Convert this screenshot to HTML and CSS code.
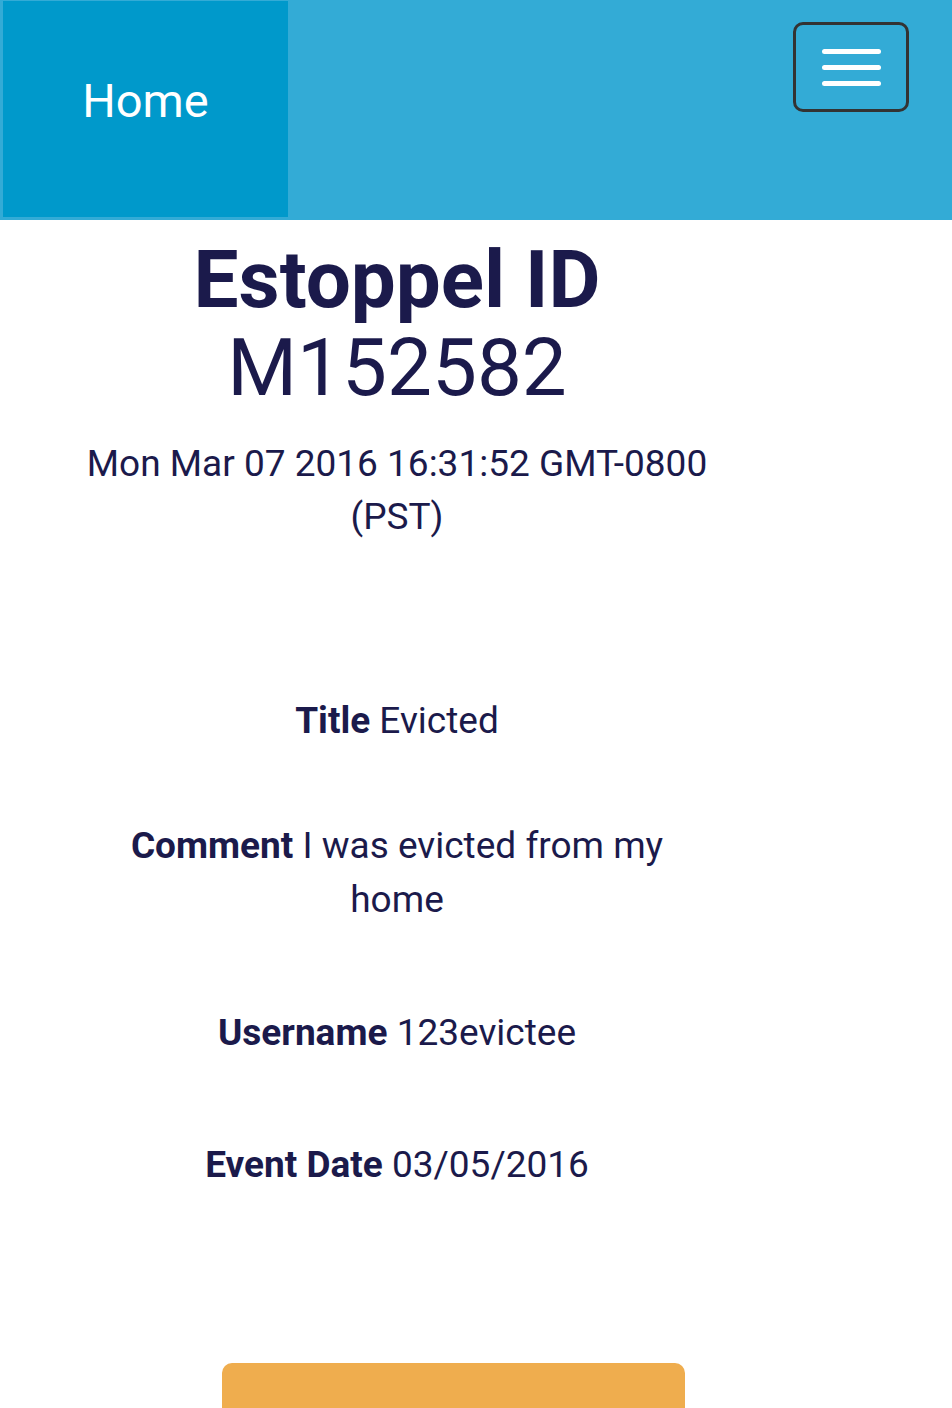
FILE: index.html
```html
<!DOCTYPE html>
<html lang="en">
<head>
<meta charset="utf-8">
<title>Estoppel ID M152582</title>
<link rel="stylesheet" href="styles.css">
</head>
<body>
<header class="topbar">
  <a class="home-link" href="#">Home</a>
  <button class="menu-toggle" type="button" aria-label="Menu">
    <span class="bar"></span>
    <span class="bar"></span>
    <span class="bar"></span>
  </button>
</header>
<main class="content">
  <h1 class="heading">Estoppel ID<br><span class="id">M152582</span></h1>
  <p class="timestamp">Mon Mar 07 2016 16:31:52 GMT-0800 (PST)</p>
  <div class="fields">
    <p class="field field-title"><strong>Title</strong> Evicted</p>
    <p class="field field-comment"><strong>Comment</strong> I was evicted from my home</p>
    <p class="field field-user"><strong>Username</strong> 123evictee</p>
    <p class="field field-date"><strong>Event Date</strong> 03/05/2016</p>
  </div>
</main>
<div class="actions">
  <button class="action-btn" type="button"></button>
</div>
</body>
</html>
```
FILE: styles.css
```css
html, body {
  margin: 0;
  padding: 0;
  background: #ffffff;
}
body {
  font-family: Roboto, "Liberation Sans", Arial, sans-serif;
  color: #1b1a4b;
  overflow: hidden;
}
.topbar {
  display: flex;
  align-items: flex-start;
  height: 220px;
  background: #33abd6;
  box-sizing: border-box;
}
.home-link {
  display: flex;
  align-items: center;
  justify-content: center;
  box-sizing: border-box;
  width: 285px;
  height: 216px;
  margin: 1px 0 0 3px;
  background: #0099cb;
  color: #ffffff;
  font-size: 47px;
  text-decoration: none;
  padding-bottom: 18px;
}
.menu-toggle {
  display: flex;
  flex-direction: column;
  align-items: center;
  justify-content: center;
  gap: 11px;
  margin: 22px 43px 0 auto;
  width: 116px;
  height: 90px;
  box-sizing: border-box;
  border: 3px solid #333333;
  border-radius: 10px;
  background: transparent;
  padding: 0;
}
.menu-toggle .bar {
  display: block;
  width: 59px;
  height: 5px;
  border-radius: 3px;
  background: #ffffff;
}
.content {
  width: 660px;
  margin-left: 67px;
  text-align: center;
}
.heading {
  margin: 16px 0 0;
  font-size: 80px;
  line-height: 88px;
  font-weight: 700;
}
.heading .id {
  font-weight: 400;
}
.timestamp {
  margin: 25px 0 0;
  font-size: 37px;
  line-height: 53px;
}
.fields {
  display: flex;
  flex-direction: column;
  margin-top: 151px;
}
.field {
  margin: 0;
  font-size: 37px;
  line-height: 54px;
  padding: 0 60px;
}
.field strong {
  font-weight: 700;
}
.field-comment { margin-top: 71px; }
.field-user { margin-top: 79px; }
.field-date { margin-top: 78px; }
.actions {
  margin-top: 171px;
  padding-left: 222px;
}
.action-btn {
  display: block;
  width: 463px;
  height: 90px;
  border: none;
  border-radius: 10px;
  background: #efad4e;
}
```
